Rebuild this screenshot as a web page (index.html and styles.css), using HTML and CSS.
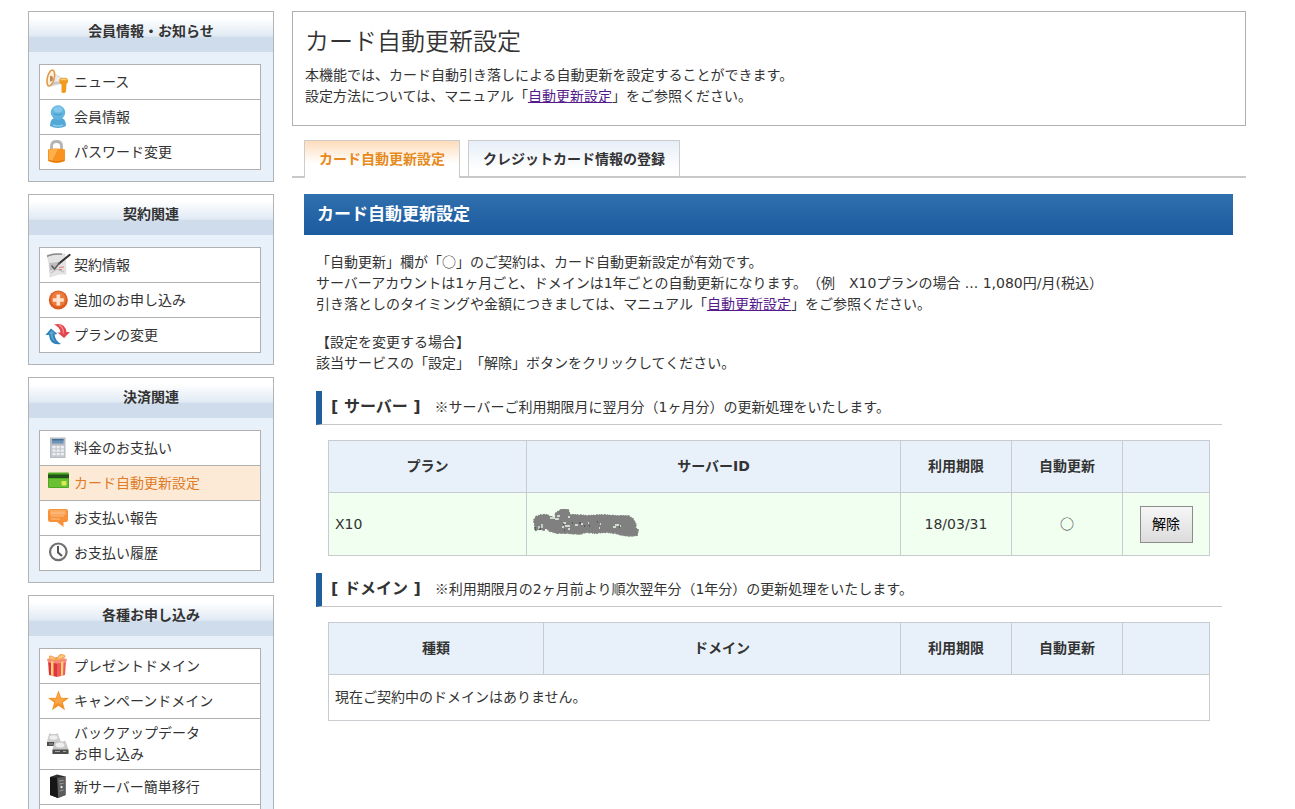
FILE: index.html
```html
<!DOCTYPE html>
<html lang="ja">
<head>
<meta charset="utf-8">
<title>カード自動更新設定</title>
<link rel="stylesheet" href="styles.css">
</head>
<body>
<div class="page">
  <nav class="sidebar">
    <section class="panel">
      <h2 class="panel-title">会員情報・お知らせ</h2>
      <ul class="menu">
        <li><a href="#">
          <svg class="icon" viewBox="0 0 24 24"><path d="M6 3L17 8.500V13L5 16z" fill="#ececec" stroke="#c4c4c4" stroke-width=".6"/><path d="M7 12l9-1v2L6 15z" fill="#c9c9c9"/><ellipse cx="4.800" cy="8" rx="3.400" ry="8.200" transform="rotate(14 4.800 8)" fill="#fdf0de" stroke="#e09a4a" stroke-width="1.600"/><path d="M4 6q3-1 3 2.500t-3 3z" fill="#c08a52"/><path d="M13.500 9q3-2 7-1 2 1 1.500 4l-1.500 2-.5 8q-2 1.500-4.500.5l0-8q-3-1-2-5.500z" fill="#f09a1e"/><path d="M15 10q3-1.500 5.500 0" stroke="#ffcf7d" stroke-width="1.300" fill="none"/></svg>
          <span>ニュース</span></a></li>
        <li><a href="#">
          <svg class="icon" viewBox="0 0 24 24"><path d="M4 21q0-6 4-8h8q4 2 4 8-8 4-16 0z" fill="#52a9d8"/><circle cx="12" cy="7.500" r="7.200" fill="#63b5e0"/><ellipse cx="12" cy="4.500" rx="4.500" ry="3" fill="#86c8eb"/><path d="M8 9q4 2 8 0" stroke="#4297c9" stroke-width="1" fill="none"/><path d="M7 20q5 2 10 0" stroke="#8ccbe9" stroke-width="1.500" fill="none"/></svg>
          <span>会員情報</span></a></li>
        <li><a href="#">
          <svg class="icon" viewBox="0 0 24 24"><path d="M5.500 11V6q0-4.500 5-4.500t5 4.500v5" fill="none" stroke="#b4b4b4" stroke-width="2.800"/><path d="M2 9.500q8-2 17 0v11.500q-8 4-17 0z" fill="#f7931e"/><path d="M3 10q5-2 9-1L6 21l-3-1z" fill="#ffb04a"/><path d="M3 20.500q7 3 15 0" stroke="#dc740c" fill="none"/></svg>
          <span>パスワード変更</span></a></li>
      </ul>
    </section>

    <section class="panel">
      <h2 class="panel-title">契約関連</h2>
      <ul class="menu">
        <li><a href="#">
          <svg class="icon" viewBox="0 0 24 24"><path d="M1 2q8-2 18-1l1 20q-7-1-16 3L3 10z" fill="#e4e4e4" stroke="#d4d4d4" stroke-width=".6"/><path d="M1 2.500q6-3 15-2v1.500Q8 1 1 4z" fill="#8a8a8a"/><path d="M3 10l10-1-4 7-5 2z" fill="#bdbdbd"/><path d="M5 20l6-4 7 3" stroke="#c4c4c4" stroke-width="1.500" fill="none"/><path d="M23.500 2L13 10.500" stroke="#333" stroke-width="2.200" stroke-linecap="round"/><path d="M14 9.500L8.500 16l-3-3.500" stroke="#5c5c5c" stroke-width="1.500" fill="none"/><path d="M13 14.500l5-.5M13 16.500h3" stroke="#e07a72" fill="none"/></svg>
          <span>契約情報</span></a></li>
        <li><a href="#">
          <svg class="icon" viewBox="0 0 24 24"><circle cx="12.300" cy="12" r="9.500" fill="#dc5c20"/><circle cx="12.300" cy="11" r="7.500" fill="#ea7b3d"/><path d="M10.500 6.500h3.600v3.700h3.700v3.600h-3.700v3.700h-3.600v-3.700H6.800v-3.600h3.700z" fill="#ffe3cf"/></svg>
          <span>追加のお申し込み</span></a></li>
        <li><a href="#">
          <svg class="icon" viewBox="0 0 24 24"><path d="M-.5 12L5 5.500l6.500 5.500-3 .5q.5 6 6.500 9.500Q4 23 3 12z" fill="#2e80b6"/><path d="M5.500 7.500l3 2.500-2 1q0 4 3 8-5-3-5-8l-2 .5z" fill="#5ba7d4"/><path d="M8 1.500Q19-1 20.500 9h3.500l-6 6-6.500-5.500h3Q14 4 8 1.500z" fill="#e2464d"/><path d="M13 2q4.500 2 4.500 8.500" stroke="#f5868a" stroke-width="1.500" fill="none"/></svg>
          <span>プランの変更</span></a></li>
      </ul>
    </section>

    <section class="panel">
      <h2 class="panel-title">決済関連</h2>
      <ul class="menu">
        <li><a href="#">
          <svg class="icon" viewBox="0 0 24 24"><path d="M4 1.500h15.500V22H4z" fill="#b4bac2"/><path d="M5 9h13.500v12H5z" fill="#c6cad0"/><path d="M6 3h11.500v4.500H6z" fill="#6d93b8"/><path d="M6 3h11.500v1.500H6z" fill="#446f9b"/><path d="M6.500 10h3v2.200h-3zM10.700 10h3v2.200h-3zM14.900 10h3v2.200h-3zM6.500 13.500h3v2.200h-3zM10.700 13.500h3v2.200h-3zM14.900 13.500h3v2.200h-3zM6.500 17h3v2.200h-3zM10.700 17h3v2.200h-3zM14.900 17h3v2.200h-3z" fill="#eef0f2"/></svg>
          <span>料金のお支払い</span></a></li>
        <li><a href="#" class="current" aria-current="page">
          <svg class="icon" viewBox="0 0 24 24"><rect x="2" y="1.500" width="21" height="15.500" rx="1" fill="#4da823"/><path d="M3 8h19v8H3z" fill="#6cc033"/><path d="M2 3.500h21V7H2z" fill="#22511a"/><rect x="15.500" y="10" width="5" height="4.500" rx="1" fill="#d8ed53"/></svg>
          <span>カード自動更新設定</span></a></li>
        <li><a href="#">
          <svg class="icon" viewBox="0 0 24 24"><path d="M4 3h16q2 0 2 2v9q0 2-2 2h-2.500v5L11 16H4q-2 0-2-2V5q0-2 2-2z" fill="#f7913a"/><path d="M4 4h16v5H4z" fill="#fbab60"/><path d="M5 7h13M5 10h13M5 13h9" stroke="#ffc08a" stroke-width="1"/></svg>
          <span>お支払い報告</span></a></li>
        <li><a href="#">
          <svg class="icon" viewBox="0 0 24 24"><circle cx="12.300" cy="10.800" r="8.300" fill="#fcfcfc" stroke="#707070" stroke-width="2.200"/><path d="M12 5v6.500l4 3.500" stroke="#555" stroke-width="2" fill="none"/></svg>
          <span>お支払い履歴</span></a></li>
      </ul>
    </section>

    <section class="panel">
      <h2 class="panel-title">各種お申し込み</h2>
      <ul class="menu">
        <li><a href="#">
          <svg class="icon" viewBox="0 0 24 24"><path d="M2 7l9 2v14l-8-2z" fill="#df343f"/><path d="M11 9l9-2-1 14-8 2z" fill="#ee5a58"/><path d="M1 5l10-2 10 2-1 3.500-9 1-9-1z" fill="#f68d78"/><path d="M5 7l2.500.5V22L5 21.500zM15 8l2.500-.5-.5 14-2 .5z" fill="#ffd172"/><path d="M11 6Q4 0 3.500 3t7.500 3q2-7 6.500-5T11 6" fill="#fbc98a" stroke="#f4a64c" stroke-width="1.200"/></svg>
          <span>プレゼントドメイン</span></a></li>
        <li><a href="#">
          <svg class="icon" viewBox="0 0 24 24"><path d="M12.500 1.500l2.600 7.200 7.900.2-6.200 4.700 2.200 7.700-6.500-4.500L6 21.300l2.200-7.700L2 8.900l7.900-.2z" fill="#f4902a"/><path d="M12.500 4l1.800 5.500 5 .2-3.800 3.300.5 3-3.500-2-4 2 1-3.500L5 9.800l5.700-.2z" fill="#fba544"/></svg>
          <span>キャンペーンドメイン</span></a></li>
        <li><a href="#">
          <svg class="icon" viewBox="0 0 24 24"><path d="M3 2l1-1 1 1h5l1-1 1 1 3 8v3H1V9.500z" fill="#cdcdcd"/><path d="M1 10h14v4H1z" fill="#4c4c4c"/><ellipse cx="7.500" cy="5.500" rx="4" ry="2.200" fill="#efefef"/><path d="M8.500 9.500l1-1 1 1h7l1-1 1 1 3 8v4H6.500v-4z" fill="#c8c8c8"/><path d="M6.500 17.500h16V22h-16z" fill="#4c4c4c"/><ellipse cx="14" cy="13" rx="4.500" ry="2.500" fill="#efefef"/><path d="M9 19.500h5M17 19.500h3M3 12h4" stroke="#a5a5a5"/></svg>
          <span>バックアップデータ<br>お申し込み</span></a></li>
        <li><a href="#">
          <svg class="icon" viewBox="0 0 24 24"><path d="M4 2l7-2.500 8.500 2V20l-7.500 3-8-3z" fill="#2e2e2e"/><path d="M11 3l8.500-1.500V20L12 23z" fill="#5c5c5c"/><path d="M4 2l7 1 1 20-8-3z" fill="#161616"/><path d="M13 6l4.500-.6M13 9l4.500-.6M13.500 16l4-1" stroke="#999"/><circle cx="15.500" cy="12" r="1.200" fill="#ddd"/></svg>
          <span>新サーバー簡単移行</span></a></li>
        <li class="menu-end"></li>
      </ul>
    </section>
  </nav>

  <main class="main">
    <header class="intro">
      <h1>カード自動更新設定</h1>
      <p>本機能では、カード自動引き落しによる自動更新を設定することができます。<br>
      設定方法については、マニュアル「<a href="#">自動更新設定</a>」をご参照ください。</p>
    </header>

    <nav class="tabs">
      <a href="#" class="tab tab-active" aria-current="page">カード自動更新設定</a>
      <a href="#" class="tab">クレジットカード情報の登録</a>
    </nav>

    <div class="content">
      <h2 class="banner">カード自動更新設定</h2>
      <div class="body">
        <p>「自動更新」欄が「<span class="symbol">○</span>」のご契約は、カード自動更新設定が有効です。<br>
        サーバーアカウントは1ヶ月ごと、ドメインは1年ごとの自動更新になります。（例　X10プランの場合 ... 1,080円/月(税込）<br>
        引き落としのタイミングや金額につきましては、マニュアル「<a href="#">自動更新設定</a>」をご参照ください。</p>
        <p>【設定を変更する場合】<br>
        該当サービスの「設定」「解除」ボタンをクリックしてください。</p>

        <div class="section-head">
          <h3>[ サーバー ]</h3>
          <span class="note"><span class="symbol">※</span>サーバーご利用期限月に翌月分（1ヶ月分）の更新処理をいたします。</span>
        </div>
        <table class="grid">
          <colgroup><col class="c-plan"><col><col class="c-date"><col class="c-date"><col class="c-action"></colgroup>
          <thead><tr><th scope="col">プラン</th><th scope="col">サーバーID</th><th scope="col">利用期限</th><th scope="col">自動更新</th><td class="blank"></td></tr></thead>
          <tbody><tr class="enabled">
            <td>X10</td>
            <td><svg class="scribble" viewBox="0 0 106 30"><path d="M1 11l2-3 5-2 6 0 4 2 3 1 3-2-2-2 4-3 4-2 5 1 2 5 6 0 12 1 14-1 14 1 12 0 5 3 3 6-1 3 3 2-1 5-6 1-9-1-7-2-9-1-11 1-8-1-8 2-12-1-10 0-7-2-4-3-2 2-4-1-4 1-1-4z" fill="#808080" stroke="#808080" stroke-width="1"/><path d="M1 11l2-3 5-2 6 0 4 2 3 1 3-2-2-2 4-3 4-2 5 1 2 5 6 0 12 1 14-1 14 1 12 0 5 3 3 6-1 3 3 2-1 5-6 1-9-1-7-2-9-1-11 1-8-1-8 2-12-1-10 0-7-2-4-3-2 2-4-1-4 1-1-4z" fill="none" stroke="#808080" stroke-width="2" stroke-dasharray="1 2 2 1 1 1"/><path d="M17 9h5M24 7h3M22 10h4M35 8h2M30 14h3M32 17h5M42 16h3M48 15h2M35 20h2M55 14h1M67 15h1M82 16h4M80 18h3M87 17h1M9 15v4M6 17v3M29 18h2M66 19h1" stroke="#eaf8e9" stroke-width="1.300"/><path d="M2 18v3M7 19v2M39 14h1M46 14h2M51 17h1M56 17h1M64 13h1M86 18h1M31 21h1M30 15h1" stroke="#333" stroke-width="1"/></svg></td>
            <td class="center">18/03/31</td>
            <td class="center"><span class="symbol">○</span></td>
            <td class="center"><button type="button" class="btn">解除</button></td>
          </tr></tbody>
        </table>

        <div class="section-head">
          <h3>[ ドメイン ]</h3>
          <span class="note"><span class="symbol">※</span>利用期限月の2ヶ月前より順次翌年分（1年分）の更新処理をいたします。</span>
        </div>
        <table class="grid">
          <colgroup><col class="c-kind"><col><col class="c-date"><col class="c-date"><col class="c-action"></colgroup>
          <thead><tr><th scope="col">種類</th><th scope="col">ドメイン</th><th scope="col">利用期限</th><th scope="col">自動更新</th><td class="blank"></td></tr></thead>
          <tbody><tr class="empty"><td colspan="5">現在ご契約中のドメインはありません。</td></tr></tbody>
        </table>
      </div>
    </div>
  </main>
</div>
</body>
</html>
```
FILE: styles.css
```css
* { box-sizing: border-box; }

body {
  margin: 0;
  height: 100vh;
  overflow: hidden;
  background: #fff;
  color: #333;
  font-family: "DejaVu Sans", "Noto Sans CJK JP", sans-serif;
  font-size: 14px;
  line-height: 21px;
  text-spacing-trim: space-all;
}

h1, h2, h3, p, ul { margin: 0; padding: 0; }

.symbol { font-family: "Noto Sans CJK JP", sans-serif; }

.page {
  display: flex;
  align-items: flex-start;
  gap: 18px;
  padding: 11px 49px 0 28px;
}

/* Sidebar */
.sidebar {
  flex: 0 0 246px;
  display: flex;
  flex-direction: column;
  gap: 12px;
}

.panel {
  border: 1px solid #b0b4b7;
  background: #e8f1f9;
  padding-bottom: 11px;
}

.panel-title {
  height: 40px;
  line-height: 39px;
  text-align: center;
  font-size: 14px;
  background: linear-gradient(#fff 15%, #e1eaf4 60%, #cfdcec 64%, #cfdcec);
}

.menu {
  list-style: none;
  margin: 12px 12px 0 10px;
  border: 1px solid #b0b0b0;
  border-bottom: 0;
  background: #fff;
}

.menu li { border-bottom: 1px solid #b0b0b0; }

.menu a {
  display: flex;
  align-items: center;
  gap: 4px;
  min-height: 34px;
  padding: 4px 6px;
  color: #333;
  text-decoration: none;
}

.menu a.current { background: #fdead6; color: #e07b27; }
.menu-end { height: 35px; }

.icon {
  flex: none;
  width: 24px;
  height: 24px;
  overflow: visible;
}

/* Main column */
.main { flex: 1; min-width: 0; }

.main p a { color: #551a8b; }

.intro {
  border: 1px solid #b0b0b0;
  padding: 12px 12px 18px;
}

.intro h1 {
  margin-bottom: 5px;
  font-size: 24px;
  font-weight: 350;
  line-height: 36px;
}

.tabs {
  display: flex;
  gap: 8px;
  margin-top: 14px;
  padding-left: 12px;
  border-bottom: 2px solid #c8c8c8;
}

.tab {
  height: 36px;
  padding: 0 14px;
  border: 1px solid #ccc;
  border-bottom: 0;
  background: linear-gradient(#e6eef8, #fff 80%);
  color: #333;
  font-weight: bold;
  line-height: 36px;
  text-decoration: none;
}

.tab-active {
  height: 38px;
  margin-bottom: -2px;
  background: linear-gradient(#fddcbb, #fff 60%);
  color: #e68a20;
}

.content { padding: 16px 13px 0 12px; }

.banner {
  height: 41px;
  padding-left: 13px;
  background: linear-gradient(#3070ae, #1b5b9f);
  color: #fff;
  font-size: 17px;
  line-height: 40px;
}

.body { padding: 16px 11px 0 12px; }
.body p { margin-bottom: 17px; }

.section-head {
  display: flex;
  align-items: center;
  gap: 14px;
  height: 34px;
  padding: 0 0 2px 9px;
  border-left: 6px solid #205e9e;
  border-bottom: 1px solid #c8c8c8;
}

.section-head h3 { font-size: 16px; }

.grid {
  width: calc(100% - 24px);
  margin: 15px 12px 17px;
  border-collapse: collapse;
  table-layout: fixed;
}

.c-plan { width: 198px; }
.c-kind { width: 215px; }
.c-date { width: 111px; }
.c-action { width: 87px; }

.grid th,
.grid td {
  border: 1px solid #c8ccd0;
  padding: 0 6px;
  text-align: left;
}

.grid th,
.grid .blank {
  height: 52px;
  background: #e8f1f9;
  text-align: center;
}

.grid .enabled td { height: 63px; background: #f0fff0; }
.grid .empty td { height: 46px; }

.grid .center { text-align: center; }

.scribble {
  display: block;
  width: 106px;
  height: 30px;
}

.btn {
  width: 53px;
  height: 37px;
  padding: 0;
  border: 1px solid #8c8c8c;
  background: linear-gradient(#f6f6f6, #dcdcdc);
  color: #000;
  font: inherit;
}
```
